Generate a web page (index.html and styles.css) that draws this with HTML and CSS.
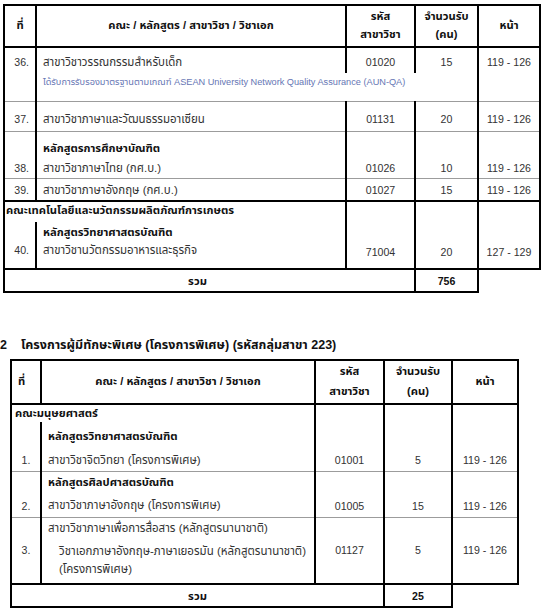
FILE: index.html
```html
<!DOCTYPE html>
<html lang="th">
<head>
<meta charset="utf-8">
<title>จำนวนรับ</title>
<link rel="stylesheet" href="styles.css">
</head>
<body>
<table class="grid g1">
  <colgroup><col class="w-no"><col class="w-name"><col class="w-code"><col class="w-cnt"><col class="w-page"></colgroup>
  <thead>
    <tr class="hd">
      <th>ที่</th>
      <th>คณะ / หลักสูตร / สาขาวิชา / วิชาเอก</th>
      <th>รหัส<br>สาขาวิชา</th>
      <th>จำนวนรับ<br>(คน)</th>
      <th>หน้า</th>
    </tr>
  </thead>
  <tbody>
    <tr class="r36a">
      <td rowspan="2" class="no">36.</td>
      <td class="name">สาขาวิชาวรรณกรรมสำหรับเด็ก</td>
      <td class="num">01020</td>
      <td class="num">15</td>
      <td rowspan="2" class="num">119 - 126</td>
    </tr>
    <tr class="r36b">
      <td colspan="3" class="note">ได้รับการรับรองมาตรฐานตามเกณฑ์ ASEAN University Network Quality Assurance (AUN-QA)</td>
    </tr>
    <tr class="gl r37">
      <td class="no">37.</td>
      <td class="name">สาขาวิชาภาษาและวัฒนธรรมอาเซียน</td>
      <td class="num">01131</td>
      <td class="num">20</td>
      <td class="num">119 - 126</td>
    </tr>
    <tr class="gl r38">
      <td class="no bot">38.</td>
      <td class="name"><b>หลักสูตรการศึกษาบัณฑิต</b><br>สาขาวิชาภาษาไทย (กศ.บ.)</td>
      <td class="num bot">01026</td>
      <td class="num bot">10</td>
      <td class="num bot">119 - 126</td>
    </tr>
    <tr class="gl r39">
      <td class="no">39.</td>
      <td class="name">สาขาวิชาภาษาอังกฤษ (กศ.บ.)</td>
      <td class="num">01027</td>
      <td class="num">15</td>
      <td class="num">119 - 126</td>
    </tr>
    <tr class="kl rfac">
      <td colspan="2" class="fac">คณะเทคโนโลยีและนวัตกรรมผลิตภัณฑ์การเกษตร</td>
      <td rowspan="2" class="num bot">71004</td>
      <td rowspan="2" class="num bot">20</td>
      <td rowspan="2" class="num bot">127 - 129</td>
    </tr>
    <tr class="r40">
      <td class="no bot">40.</td>
      <td class="name"><b>หลักสูตรวิทยาศาสตรบัณฑิต</b><br>สาขาวิชานวัตกรรมอาหารและธุรกิจ</td>
    </tr>
    <tr class="kl sum">
      <td colspan="3" class="total">รวม</td>
      <td class="num strong">756</td>
      <td class="blank"></td>
    </tr>
  </tbody>
</table>

<div class="section">
  <span class="sec-no">2</span>
  <span class="sec-title">โครงการผู้มีทักษะพิเศษ (โครงการพิเศษ) (รหัสกลุ่มสาขา 223)</span>
</div>

<table class="grid g2">
  <colgroup><col class="v-no"><col class="v-name"><col class="v-code"><col class="v-cnt"><col class="v-page"></colgroup>
  <thead>
    <tr class="hd">
      <th class="left">ที่</th>
      <th>คณะ / หลักสูตร / สาขาวิชา / วิชาเอก</th>
      <th>รหัส<br>สาขาวิชา</th>
      <th>จำนวนรับ<br>(คน)</th>
      <th>หน้า</th>
    </tr>
  </thead>
  <tbody>
    <tr class="kl rfac">
      <td colspan="2" class="fac">คณะมนุษยศาสตร์</td>
      <td rowspan="2" class="num bot">01001</td>
      <td rowspan="2" class="num bot">5</td>
      <td rowspan="2" class="num bot">119 - 126</td>
    </tr>
    <tr class="q1">
      <td class="no bot">1.</td>
      <td class="name"><b class="ln">หลักสูตรวิทยาศาสตรบัณฑิต</b><span class="ln sp24">สาขาวิชาจิตวิทยา (โครงการพิเศษ)</span></td>
    </tr>
    <tr class="gl q2">
      <td class="no bot">2.</td>
      <td class="name"><b class="ln">หลักสูตรศิลปศาสตรบัณฑิต</b><span class="ln sp23">สาขาวิชาภาษาอังกฤษ (โครงการพิเศษ)</span></td>
      <td class="num bot">01005</td>
      <td class="num bot">15</td>
      <td class="num bot">119 - 126</td>
    </tr>
    <tr class="gl q3">
      <td class="no mid">3.</td>
      <td class="name"><span class="ln">สาขาวิชาภาษาเพื่อการสื่อสาร (หลักสูตรนานาชาติ)</span><span class="ln sp24 ind">วิชาเอกภาษาอังกฤษ-ภาษาเยอรมัน (หลักสูตรนานาชาติ)<br>(โครงการพิเศษ)</span></td>
      <td class="num mid">01127</td>
      <td class="num mid">5</td>
      <td class="num mid">119 - 126</td>
    </tr>
    <tr class="kl sum">
      <td colspan="3" class="total">รวม</td>
      <td class="num strong">25</td>
      <td class="blank"></td>
    </tr>
  </tbody>
</table>
</body>
</html>
```

FILE: styles.css
```css
* { box-sizing: border-box; }
html, body { margin: 0; padding: 0; background: #fff; }
body {
  font-family: "Liberation Sans", "Noto Sans Thai", "Noto Sans", sans-serif;
  font-size: 11.5px;
  color: #333;
}

.grid {
  border-collapse: collapse;
  table-layout: fixed;
}
.grid th,
.grid td {
  border-left: 2px solid #000;
  border-right: 2px solid #000;
  padding: 0;
  line-height: 20px;
  vertical-align: top;
  white-space: nowrap;
}
.grid th {
  border-top: 2px solid #000;
  border-bottom: 2px solid #000;
  font-weight: bold;
  font-size: 11.2px;
  color: #111;
  text-align: center;
  vertical-align: middle;
  line-height: 18px;
  padding-bottom: 3px;
}
.grid tr.gl > td { border-top: 1px solid #9c9c9c; }
.grid tr.kl > td { border-top: 2px solid #000; }
.grid tr.sum > td { border-bottom: 2px solid #000; }
.grid tr.sum > td.blank { border-right: 0 none; border-bottom: 0 none; border-left: 0 none; }

/* table 1 geometry */
.g1 { width: 538px; margin: 4px 0 0 3px; }
.w-no { width: 32px; }
.w-name { width: 310px; }
.w-code { width: 69px; }
.w-cnt { width: 63px; }
.w-page { width: 62px; }

.g1 tr.hd { height: 42px; }
.g1 tr.r36a { height: 26px; }
.g1 tr.r36b { height: 28px; }
.g1 tr.r37 { height: 30px; }
.g1 tr.r38 { height: 47px; }
.g1 tr.r39 { height: 23px; }
.g1 tr.rfac { height: 21px; }
.g1 tr.r40 { height: 47px; }
.g1 tr.sum { height: 23px; }

.g1 .no { text-align: right; padding-right: 6px; }
.g1 .name { padding-left: 6px; }
.g1 .fac { padding-left: 1px; }

.g1 tr.r36a > td { padding-top: 4px; }
.g1 .note {
  font-size: 9.2px;
  line-height: 16px;
  color: #6676b4;
  padding: 1px 0 0 6px;
}
.g1 tr.r37 > td { padding-top: 7px; }
.g1 tr.r38 > td { padding-top: 6px; }
.g1 tr.r38 > td.bot { vertical-align: bottom; padding: 0; }
.g1 tr.r38 > td.no.bot { padding-right: 6px; }
.g1 tr.r39 > td { padding-top: 1px; }
.g1 tr.rfac > td.fac { line-height: 16px; padding-top: 0; }
.g1 tr.rfac > td.bot,
.g1 tr.r40 > td.bot { vertical-align: bottom; padding-bottom: 6px; }
.g1 tr.r40 > td.no.bot { padding-bottom: 8px; padding-right: 6px; }
.g1 tr.r40 > td.name { line-height: 18px; padding-top: 1px; }
.g1 tr.sum > td { padding-top: 1px; }
.g1 .total { padding-right: 24px; }

.num { text-align: center; font-size: 10.6px; }
.no { font-size: 10.6px; }
.strong { font-weight: bold; color: #111; }
.total { text-align: center; font-weight: bold; font-size: 11.2px; color: #111; }
.fac { font-weight: bold; font-size: 11.2px; color: #111; }
.name b { color: #111; font-size: 11.2px; }

/* section heading */
.section {
  display: flex;
  align-items: baseline;
  gap: 14px;
  margin: 42px 0 4px 0;
  font-size: 12.5px;
  line-height: 20px;
  font-weight: bold;
  color: #111;
}
.sec-no { padding-left: 0; }

/* table 2 geometry */
.g2 { width: 509px; margin: 0 0 0 10px; }
.v-no { width: 30px; }
.v-name { width: 274px; }
.v-code { width: 69px; }
.v-cnt { width: 68px; }
.v-page { width: 66px; }

.g2 th { line-height: 20px; padding-bottom: 2px; }
.g2 th.left { text-align: left; padding-left: 6px; }
.g2 tr.hd { height: 42px; }
.g2 tr.rfac { height: 18px; }
.g2 tr.q1 { height: 49px; }
.g2 tr.q2 { height: 46px; }
.g2 tr.q3 { height: 67px; }
.g2 tr.sum { height: 23px; }

.g2 .no { text-align: center; }
.g2 .name { padding-left: 6px; }
.g2 .fac { padding-left: 3px; line-height: 16px; }
.g2 .ln { display: block; }
.g2 .sp24 { margin-top: 4px; }
.g2 .sp23 { margin-top: 3px; }
.g2 .ind { padding-left: 11px; line-height: 18px; }
.g2 tr.q1 > td.name { padding-top: 4px; }
.g2 td.bot { vertical-align: bottom; padding-bottom: 1px; }
.g2 td.mid { vertical-align: middle; }
.g2 tr.q3 > td.name { padding-top: 0; }
.g2 tr.sum > td { padding-top: 1px; }
```
